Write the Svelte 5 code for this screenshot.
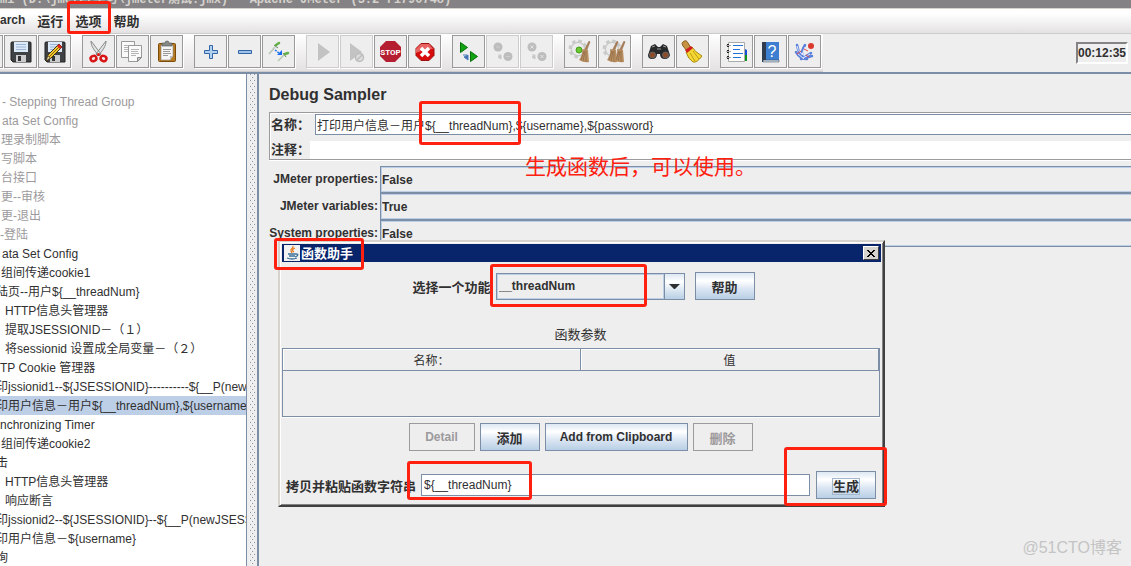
<script lang="ts">
	type Row = { text: string; indent: number; off?: boolean; selected?: boolean };

	const menus = ['arch', '运行', '选项', '帮助'];

	const toolGroups = [
		['open', 'save', 'edit'],
		['cut', 'copy', 'paste'],
		['expand', 'collapse', 'toggle'],
		['start', 'startNoPause', 'stop', 'shutdown'],
		['remoteStart', 'remoteStop', 'remoteShutdown'],
		['clear', 'clearAll'],
		['search', 'resetSearch'],
		['functions', 'help', 'whats']
	];
	const disabledTools = ['start', 'startNoPause', 'remoteStop', 'remoteShutdown'];

	const rows: Row[] = [
		{ text: '- Stepping Thread Group', indent: 2, off: true },
		{ text: 'ata Set Config', indent: 2, off: true },
		{ text: '理录制脚本', indent: 1, off: true },
		{ text: '写脚本', indent: 1, off: true },
		{ text: '台接口', indent: 1, off: true },
		{ text: '更--审核', indent: 1, off: true },
		{ text: '更-退出', indent: 1, off: true },
		{ text: '-登陆', indent: 0, off: true },
		{ text: 'ata Set Config', indent: 2 },
		{ text: '组间传递cookie1', indent: 1 },
		{ text: '陆页--用户${__threadNum}', indent: -4 },
		{ text: 'HTTP信息头管理器', indent: 5 },
		{ text: '提取JSESSIONID－（１）', indent: 5 },
		{ text: '将sessionid 设置成全局变量－（２）', indent: 5 },
		{ text: 'TP Cookie 管理器', indent: 0 },
		{ text: '印jssionid1--${JSESSIONID}----------${__P(newJSESSIONID)}', indent: -4 },
		{ text: '印用户信息－用户${__threadNum},${username},${password}', indent: -4, selected: true },
		{ text: 'nchronizing Timer', indent: 0 },
		{ text: '组间传递cookie2', indent: 1 },
		{ text: '击', indent: -4 },
		{ text: 'HTTP信息头管理器', indent: 5 },
		{ text: '响应断言', indent: 5 },
		{ text: '印jssionid2--${JSESSIONID}--${__P(newJSESSIONID)}', indent: -4 },
		{ text: '印用户信息－${username}', indent: -4 },
		{ text: '询', indent: -4 }
	];

	const properties = [
		{ id: 'jmeter-props', label: 'JMeter properties:', value: 'False' },
		{ id: 'jmeter-vars', label: 'JMeter variables:', value: 'True' },
		{ id: 'system-props', label: 'System properties:', value: 'False' }
	];

	let name = $state('打印用户信息－用户${__threadNum},${username},${password}');
	let comment = $state('');
	let result = $state('${__threadNum}');
</script>

{#snippet floppy()}
	<path d="M7 8q0-1 1-1h18q1 0 1 1v19H9l-2-2z" fill="#3f4245" stroke="#222" />
	<path d="M10 7h14v10H10z" fill="#dce9f8" />
	<path d="M12 9.500h10M12 12h10M12 14.500h10" stroke="#9cb4d4" />
	<path d="M12 20h10v7H12z" fill="#c9cbcd" />
	<path d="M14 21h3v5h-3z" fill="#333" />
{/snippet}

{#snippet page(x: number, y: number)}
	<g transform="translate({x} {y})">
		<path d="M.5.5h13v12l-4 4h-9z" fill="#fafafa" stroke="#999" />
		<path d="M13.500 12.500h-4v4z" fill="#ccc" stroke="#888" />
		<path d="M3 4.500h8M3 6.500h7M3 8.500h8M3 10.500h5" stroke="#b5b5b5" />
	</g>
{/snippet}

{#snippet gear()}
	<circle cx="14" cy="14" r="6.500" fill="#e5e5e5" stroke="#c8cac8" stroke-width="2" />
	<circle cx="14" cy="14" r="8" fill="none" stroke="#c8cac8" stroke-width="3" stroke-dasharray="3.500 2.780" />
	<circle cx="14" cy="14" r="6" fill="#ebebeb" />
{/snippet}

{#snippet broom(x: number)}
	<g transform="translate({x} 0)">
		<path d="M25 6l1 1-4 10-2-1z" fill="#ad8056" stroke="#8b6544" stroke-width=".5" />
		<path d="M18 14l6 1 1 12q-5 1-10-2 4-5 3-11z" fill="#b98f62" />
		<path d="M20 16l-3 9M21 16l-2 10M22 16v11" stroke="#916c48" stroke-width=".8" />
	</g>
{/snippet}

{#snippet icon(kind: string)}
	<svg viewBox="0 0 33 33" width="33" height="33" aria-hidden="true">
		{#if kind === 'open'}
			<path d="M7 12h8l2 2h9v12H7z" fill="#729fcf" />
		{:else if kind === 'save'}
			{@render floppy()}
		{:else if kind === 'edit'}
			{@render floppy()}
			<path d="M8 26l2-6L21 9l3 3-11 11z" fill="#f3c62c" stroke="#3b3218" />
			<path d="M11 22L22 11" stroke="#806414" />
			<path d="M19 11l2-2 3 3-2 2z" fill="#e32622" />
			<path d="M8 26l2-5 2 2z" fill="#f4dfb2" stroke="#332a18" stroke-width=".5" />
		{:else if kind === 'cut'}
			<path d="M9 6c0 5 3 9 8 15l2-2zM24 6c0 5-3 9-8 15l-2-2z" fill="#e4e6e4" stroke="#858a88" />
			<ellipse cx="11.500" cy="23.500" rx="3" ry="2.500" fill="none" stroke="#d91616" stroke-width="2.500" transform="rotate(-25 11.500 23.500)" />
			<ellipse cx="21.500" cy="23.500" rx="3" ry="2.500" fill="none" stroke="#d91616" stroke-width="2.500" transform="rotate(25 21.500 23.500)" />
			<circle cx="16.500" cy="19.500" r="1.500" fill="#d91616" />
		{:else if kind === 'copy'}
			{@render page(5, 6)}
			{@render page(12, 10)}
		{:else if kind === 'paste'}
			<rect x="8.500" y="8.500" width="17" height="18" rx="1" fill="#b87a20" stroke="#7a4b09" />
			<path d="M11 10h12v11l-3 4h-9z" fill="#f6f6f6" stroke="#888" stroke-width=".6" />
			<path d="M23 21h-3v4z" fill="#bbb" />
			<path d="M13 14.500h8M13 16.500h7M13 18.500h8M13 20.500h5" stroke="#999" />
			<path d="M12 11V8h3q0-2 2-2t2 2h3v3z" fill="#868985" stroke="#4c4e4c" stroke-width=".6" />
		{:else if kind === 'expand'}
			<path d="M15.500 10.500h3v5h5v3h-5v5h-3v-5h-5v-3h5z" fill="#b0d0f0" stroke="#3465a4" />
		{:else if kind === 'collapse'}
			<path d="M10.500 15.500h13v3h-13z" fill="#9ec2e8" stroke="#3465a4" />
		{:else if kind === 'toggle'}
			<path d="M7 19l6-7M16 26l6-6" stroke="#b6c6b4" stroke-width="1.500" />
			<path d="M12 10l4 3M21 18l3 4" stroke="#63855c" />
			<path d="M14 10l3-2M23 19l3-1" stroke="#62b048" stroke-width="2.500" stroke-linecap="round" />
			<path d="M13 15l4 3" stroke="#2277e8" stroke-width="1.500" stroke-dasharray="2 1" />
			<path d="M20 15v5h-5z" fill="#166af0" />
		{:else if kind === 'start'}
			<path d="M12 8l12 9-12 9z" fill="#c3c3c3" />
		{:else if kind === 'startNoPause'}
			<path d="M10 8l12 9-12 9z" fill="#c3c3c3" />
			<circle cx="19.500" cy="22.500" r="4" fill="#ddd" stroke="#bdbdbd" stroke-width="1.500" />
			<path d="M16 26l7-7" stroke="#bdbdbd" stroke-width="1.500" />
		{:else if kind === 'stop'}
			<path d="M12 6h9l6 6v9l-6 6h-9l-6-6v-9z" fill="#b51d30" />
			<text x="16.500" y="20" text-anchor="middle" class="stop-text">STOP</text>
		{:else if kind === 'shutdown'}
			<path d="M13 8.500h8l5 5v7l-5 5h-8l-5-5v-7z" fill="#d80b0b" stroke="#9c1010" />
			<path d="M13 9h8l4 5q-8 0-17 4v-4z" fill="#e96363" />
			<path d="M13 13l8 8M21 13l-8 8" stroke="#fff" stroke-width="3.500" />
		{:else if kind === 'remoteStart'}
			<path d="M8.500 7.500l7 5-7 5zM18.500 16.500l7 5-7 5z" fill="#12a312" stroke="#087008" />
			<path d="M11 20h4M16 20v5l-4-3z" stroke="#4d7cba" fill="#3f6eb0" />
		{:else if kind === 'remoteStop' || kind === 'remoteShutdown'}
			<circle cx="12" cy="12" r="4.500" fill="#bdbdbd" />
			<circle cx="22" cy="21.500" r="4.500" fill="#bdbdbd" />
			<path d="M12 20h3M15 20v4l-3-2z" fill="#c2c2c2" stroke="#c8c8c8" />
			{#if kind === 'remoteStop'}
				<path d="M10 12h4M20 21.500h4" stroke="#cfcfcf" />
			{:else}
				<path d="M10.500 10.500l3 3M13.500 10.500l-3 3M20.500 20l3 3M23.500 20l-3 3" stroke="#e2e2e2" />
			{/if}
		{:else if kind === 'clear'}
			{@render gear()}
			<circle cx="15" cy="15" r="3" fill="#6cc832" stroke="#439d18" />
			{@render broom(0)}
		{:else if kind === 'clearAll'}
			{@render gear()}
			{@render broom(-6)}
			{@render broom(1)}
		{:else if kind === 'search'}
			<path d="M9 11l4-2 3 3h2l3-3 4 2 3 9q-1 4-5 4-5 0-5-5h-3q0 5-5 5-4 0-4-4z" fill="#27292a" />
			<path d="M10 12l3-1M21 11l3 1M15 14h4" stroke="#999" />
			<circle cx="10.500" cy="20" r="3" fill="#8e4b25" stroke="#666" />
			<circle cx="23.500" cy="20" r="3" fill="#8e4b25" stroke="#666" />
		{:else if kind === 'resetSearch'}
			<path d="M7 7q3-3 5 1l3 5-4 3-4-5q-2-3 0-4z" fill="#c69243" stroke="#8a5d1e" />
			<path d="M10 17q4-1 6-5 3 5 10 9-5 7-9 6-5-3-7-10z" fill="#f3d535" stroke="#a88b0a" />
			<path d="M9 15l6-4 2 2-6 5z" fill="#cf1f1f" />
			<path d="M14 18l5 8M17 16l6 8" stroke="#c0a010" />
		{:else if kind === 'functions'}
			<path d="M24 15h3v11h-5z" fill="#0c941a" />
			<path d="M25 14l2 1v5h-2z" fill="#1552d8" />
			<path d="M8.500 7.500h16v19h-16z" fill="#fff" stroke="#aaa" />
			<path d="M13 10.500h10M13 14.500h7M13 18.500h10M13 22.500h8" stroke="#2274d9" />
			<path d="M8 9v3M8 15v3M8 21v3" stroke="#222" stroke-width="2" />
			<path d="M6 10.500h5M6 16.500h5M6 22.500h5" stroke="#aaa" />
		{:else if kind === 'help'}
			<path d="M8 7h17v18H8z" fill="#3c7fd0" />
			<path d="M8 7h4v20H8z" fill="#2f3d4e" />
			<path d="M9 25h16v2H9z" fill="#c9d3df" stroke="#345" stroke-width=".5" />
			<text x="18" y="22" text-anchor="middle" class="help-text">?</text>
		{:else if kind === 'whats'}
			<path d="M9 10c1 6 3 10 8 12M8 17c3 5 6 7 11 7M17 10c-3 5-4 8-2 13M23 18l-8 5M24 21l-11 3" stroke="#5b80dc" stroke-width="2.500" fill="none" stroke-linecap="round" />
			<path d="M9 11c1 5 4 8 8 10M9 18l7 6M17 12l-3 8M22 19l-7 4" stroke="#e8efff" fill="none" />
			<path d="M9 19l4-3M16 14l4 2M18 20l3 2" stroke="#e34d4d" />
			<circle cx="23" cy="11" r="3" fill="#db3b2f" />
		{/if}
	</svg>
{/snippet}

<div class="app">
	<header class="title">mi (D:\jmeter学习\jmeter测试.jmx) - Apache JMeter (3.2 r1790748)</header>

	<nav class="menubar">
		{#each menus as menu}
			<button class="menu">{menu}</button>
		{/each}
	</nav>

	<div class="toolbar">
		<div class="tools">
			{#each toolGroups as group}
				<div class="tool-group">
					{#each group as tool}
						<button class="tool" aria-label={tool} disabled={disabledTools.includes(tool)}>
							{@render icon(tool)}
						</button>
					{/each}
				</div>
			{/each}
		</div>
		<output class="timer">00:12:35</output>
	</div>

	<div class="workspace">
		<ul class="tree">
			{#each rows as row}
				<li class:off={row.off} class:selected={row.selected}>
					<span style="margin-left: {row.indent}px">{row.text}</span>
				</li>
			{/each}
		</ul>

		<div class="splitter">
			<svg width="6" height="100%" aria-hidden="true">
				<defs>
					<pattern id="bumps" width="4" height="6" patternUnits="userSpaceOnUse">
						<path d="M1 0h1v1h-1zM3 3h1v1h-1z" fill="#7b8ea5" />
						<path d="M0 0h1v1h-1zM2 3h1v1h-1z" fill="#fff" />
					</pattern>
				</defs>
				<rect width="6" height="100%" fill="url(#bumps)" />
			</svg>
		</div>

		<main>
			<h1>Debug Sampler</h1>
			<div class="naming">
				<div class="name-row">
					<label for="name">名称：</label>
					<input id="name" class="name" bind:value={name} />
				</div>
				<div class="comment-row">
					<label for="comment">注释：</label>
					<input id="comment" class="comment" bind:value={comment} />
				</div>
			</div>
			<div class="props">
				{#each properties as prop}
					<label for={prop.id}>{prop.label}</label>
					<select id={prop.id}>
						<option>{prop.value}</option>
					</select>
				{/each}
			</div>
		</main>
	</div>

	<div class="dialog" role="dialog" aria-labelledby="dialog-title">
		<div class="dialog-bar">
			<svg viewBox="0 0 16 16" width="16" height="16" aria-hidden="true">
				<path d="M0 0h16v16H0z" fill="#f2f2f2" />
				<path d="M9 1c1 2-3 3-2 5l1 2M11 3c-3 1-3 3-1 4" stroke="#e87a1c" stroke-width="1.300" fill="none" />
				<path d="M4 9h8M5 11h6M12 9q3 0 1 2l-2 1M3 13q5 2 10 0" stroke="#3f719b" stroke-width="1.300" fill="none" />
			</svg>
			<span id="dialog-title">函数助手</span>
			<button class="close" aria-label="close">
				<svg viewBox="0 0 8 7" width="8" height="7" aria-hidden="true">
					<path d="M0 0l7 7M1 0l7 7M7 0l-7 7M8 0l-7 7" stroke="#000" />
				</svg>
			</button>
		</div>

		<div class="chooser">
			<label for="func">选择一个功能</label>
			<span class="combo">
				<select id="func">
					<option>__threadNum</option>
				</select>
				<svg class="arrow" viewBox="0 0 19 25" width="19" height="25" aria-hidden="true">
					<path d="M4 10h11l-5 5h-1z" fill="#313031" />
				</svg>
			</span>
			<button class="btn">帮助</button>
		</div>

		<div class="caption">函数参数</div>
		<div class="params">
			<table>
				<thead>
					<tr><th>名称：</th><th>值</th></tr>
				</thead>
			</table>
		</div>

		<div class="actions">
			<button class="btn narrow" disabled>Detail</button>
			<button class="btn">添加</button>
			<button class="btn wide">Add from Clipboard</button>
			<button class="btn" disabled>删除</button>
		</div>

		<div class="result">
			<label for="result">拷贝并粘贴函数字符串</label>
			<input id="result" bind:value={result} />
			<button class="btn"><span class="focus">生成</span></button>
		</div>
	</div>

	<div class="mark menu-mark"></div>
	<div class="mark name-mark"></div>
	<div class="mark title-mark"></div>
	<div class="mark func-mark"></div>
	<div class="mark result-mark"></div>
	<div class="mark generate-mark"></div>
	<p class="note">生成函数后，可以使用。</p>
	<div class="watermark">@51CTO博客</div>
</div>

<style>
	:global(body) {
		background: #eee;
	}

	.app {
		position: relative;
		display: flex;
		flex-direction: column;
		height: 100vh;
		overflow: hidden;
		color: #313031;
		font: 12px 'Liberation Sans', 'Noto Sans CJK SC', sans-serif;
	}

	button,
	input,
	select {
		box-sizing: border-box;
		margin: 0;
		padding: 0;
		border: 0;
		border-radius: 0;
		appearance: none;
		color: inherit;
		font: inherit;
	}

	label,
	.menu,
	.btn,
	.timer,
	select {
		font-weight: bold;
	}

	.title {
		display: flex;
		flex: none;
		align-items: flex-end;
		height: 8px;
		overflow: hidden;
		background: #848284;
		color: #d6d3ce;
		font: bold 12px/16px 'Liberation Mono', 'Noto Sans CJK SC', monospace;
		white-space: pre;
	}

	.menubar {
		display: flex;
		flex: none;
		box-sizing: border-box;
		gap: 12px;
		height: 26px;
		border-top: 1px solid #d6d3ce;
		border-bottom: 1px solid #ccc;
		background: linear-gradient(#fff 20%, #e4e1e3);
	}

	.menu {
		height: 22px;
		background: none;
		font-size: 13px;
	}

	.menu:first-child {
		font-size: 12px;
	}

	.toolbar {
		display: flex;
		flex: none;
		box-sizing: border-box;
		align-items: flex-start;
		justify-content: space-between;
		height: 40px;
		border-bottom: 2px solid #7b8ea5;
	}

	.tools {
		display: flex;
		box-sizing: border-box;
		gap: 11px;
		height: 38px;
		margin-left: -30px;
		padding: 1px 2px 0 0;
		border-bottom: 1px solid #ccc;
		background: linear-gradient(#fff, #e4e1e3);
	}

	.tool-group {
		display: flex;
		gap: 1px;
	}

	.tool {
		width: 33px;
		height: 33px;
		border: 1px solid #9a999a;
		background: #eee;
		box-shadow: 1px 1px #fff;
	}

	.tool:disabled {
		border-color: #ccc;
	}

	.tool svg {
		display: block;
		margin: -1px;
	}

	.stop-text {
		fill: #fff;
		font: bold 8px Roboto, sans-serif;
	}

	.help-text {
		fill: #fff;
		font: 16px 'Liberation Sans', sans-serif;
	}

	.timer {
		margin: 8px 3px 0 0;
		border: 2px solid;
		border-color: #848284 #fff #fff #848284;
		line-height: 18px;
	}

	.workspace {
		display: flex;
		flex: 1;
		min-height: 0;
	}

	.tree {
		flex: none;
		box-sizing: border-box;
		width: 247px;
		margin: 0;
		padding: 18px 0 0;
		overflow: hidden;
		border-right: 1px solid #7b8ea5;
		background: #fff;
		list-style: none;
	}

	.tree li {
		height: 19px;
		line-height: 20px;
		white-space: pre;
	}

	.tree .off {
		color: #9c9a9c;
	}

	.tree .selected {
		background: #bdcfe7;
	}

	.splitter {
		display: flex;
		flex: none;
		justify-content: center;
		width: 10px;
		border-right: 2px solid #7b8ea5;
	}

	main {
		flex: 1;
		min-width: 0;
		padding-left: 10px;
	}

	h1 {
		margin: 0;
		padding: 12px 0 8px;
		font: bold 16px/18px 'Liberation Sans', sans-serif;
	}

	.naming {
		display: flex;
		flex-direction: column;
		gap: 6px;
		padding: 1px 0 0 1px;
		border: 1px solid #9c9a9c;
		border-right: 0;
		box-shadow: inset 1px 1px #fff, 0 1px #fff;
	}

	.naming label {
		flex: none;
		font-size: 13px;
		line-height: 22px;
	}

	.name-row,
	.comment-row {
		display: flex;
	}

	.name-row {
		gap: 5px;
		height: 21px;
	}

	.naming input {
		flex: 1;
		min-width: 0;
		background: #fff;
	}

	.name {
		height: 21px;
		padding-left: 1px;
		border: 1px solid #7b8ea5;
		border-right: 0;
	}

	.comment {
		height: 18px;
	}

	.naming .comment-row label {
		line-height: 18px;
	}

	.props {
		display: grid;
		grid-template-columns: 109px 1fr;
		column-gap: 2px;
		padding-top: 6px;
	}

	.props label {
		line-height: 26px;
		text-align: right;
		white-space: nowrap;
	}

	.props select {
		height: 27px;
		padding-left: 1px;
		border: 1px solid #7b8ea5;
		border-right: 0;
		background: #eee;
		box-shadow: inset 1px 1px #bdcfe7, inset 0 -1px #bdcfe7;
	}

	.dialog {
		position: absolute;
		top: 240px;
		left: 278px;
		box-sizing: border-box;
		width: 607px;
		padding: 2px;
		border: 2px solid;
		border-color: #d6d3ce #404040 #404040 #d6d3ce;
		background: #eee;
		box-shadow: inset 1px 1px #fff, inset -1px -1px #848284;
	}

	.dialog-bar {
		display: flex;
		align-items: center;
		gap: 1px;
		height: 18px;
		padding: 0 2px;
		background: #08246b;
		color: #fff;
		font: bold 13px/18px 'Noto Sans CJK SC', sans-serif;
	}

	.close {
		display: flex;
		align-items: center;
		justify-content: center;
		width: 16px;
		height: 14px;
		margin-left: auto;
		border: 1px solid;
		border-color: #fff #404040 #404040 #fff;
		background: #d6d3ce;
	}

	.chooser {
		display: flex;
		align-items: center;
		justify-content: center;
		padding: 10px 0 24px 4px;
	}

	.chooser label,
	.result label {
		font-size: 13px;
		white-space: nowrap;
	}

	.combo {
		display: flex;
		margin: 0 10px 0 5px;
		border: 1px solid #7b8ea5;
	}

	.combo select {
		width: 167px;
		height: 25px;
		padding-left: 1px;
		border: 1px solid #bdcfe7;
		background: #eee;
	}

	.arrow {
		border-left: 1px solid #7b8ea5;
		background: linear-gradient(#dde8f3, #fff 30%, #b8cfe5);
	}

	.btn {
		width: 60px;
		height: 28px;
		border: 1px solid #7b8ea5;
		background: linear-gradient(#dde8f3, #fff 30%, #dce6f3 60%, #b8cfe5);
		font-size: 13px;
		white-space: nowrap;
	}

	.btn:disabled {
		border-color: #9c9a9c;
		background: #eee;
		color: #9c9a9c;
	}

	.narrow {
		width: 66px;
		font-size: 12px;
	}

	.wide {
		width: 143px;
		font-size: 12px;
	}

	.caption {
		padding-right: 2px;
		font: 13px/20px 'Noto Sans CJK SC', sans-serif;
		text-align: center;
	}

	.params {
		height: 68px;
		margin: 4px 1px 0 0;
		border: 1px solid #7b8ea5;
		border-top: 0;
		box-shadow: 0 1px #fff;
	}

	table {
		width: 100%;
		border-spacing: 0;
		table-layout: fixed;
	}

	th {
		height: 21px;
		padding: 0;
		border: 1px solid #7b8ea5;
		border-width: 1px 1px 1px 0;
		box-shadow: inset 1px 1px #fff;
		font-weight: normal;
	}

	.actions {
		display: flex;
		justify-content: center;
		gap: 5px;
		padding: 6px 2px 20px 0;
	}

	.result {
		display: flex;
		align-items: center;
		padding: 0 5px 4px 4px;
	}

	.result input {
		flex: 1;
		min-width: 0;
		height: 22px;
		margin: 0 6px 0 5px;
		padding-left: 2px;
		border: 1px solid #7b8ea5;
		background: #fff;
	}

	.focus {
		border: 1px solid #a3b8cc;
	}

	/* red pen marks drawn over the windows */
	.mark {
		position: absolute;
		box-sizing: border-box;
		border: 3px solid #ff2010;
		border-radius: 3px;
		pointer-events: none;
	}

	.menu-mark {
		top: 1px;
		left: 67px;
		width: 44px;
		height: 33px;
	}

	.name-mark {
		top: 101px;
		left: 419px;
		width: 102px;
		height: 44px;
	}

	.title-mark {
		top: 238px;
		left: 274px;
		width: 90px;
		height: 32px;
	}

	.func-mark {
		top: 264px;
		left: 490px;
		width: 157px;
		height: 43px;
	}

	.result-mark {
		top: 461px;
		left: 407px;
		width: 125px;
		height: 39px;
	}

	.generate-mark {
		top: 447px;
		left: 784px;
		width: 103px;
		height: 59px;
	}

	.note {
		position: absolute;
		top: 150px;
		left: 525px;
		margin: 0;
		color: #ff2010;
		font: 21px/30px 'Noto Sans CJK SC', sans-serif;
	}

	.watermark {
		position: absolute;
		right: 9px;
		bottom: 8px;
		color: #c4c4c4;
		font: 16px/20px 'Liberation Sans', 'Noto Sans CJK SC', sans-serif;
	}
</style>
